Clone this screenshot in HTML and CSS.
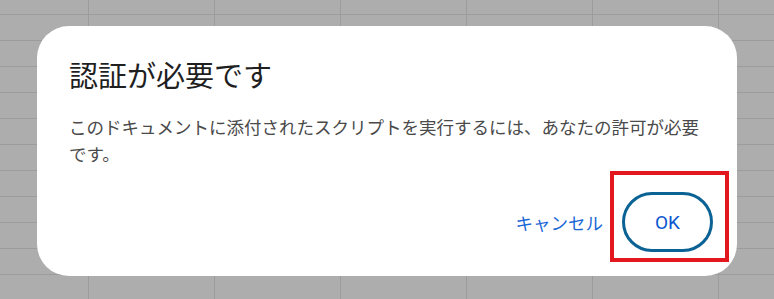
FILE: index.html
```html
<!DOCTYPE html>
<html lang="ja">
<head>
    <meta charset="UTF-8">
    <meta name="viewport" content="width=device-width, initial-scale=1.0">
    <title>認証が必要です</title>
    <link rel="stylesheet" href="styles.css">
</head>
<body>
    <!-- Sheet grid behind the dialog -->
    <div class="sheet-backdrop">
        <div class="auth-dialog" role="dialog" aria-labelledby="auth-title">
            <h2 id="auth-title" class="auth-title">認証が必要です</h2>
            <p class="auth-text">このドキュメントに添付されたスクリプトを実行するには、あなたの許可が必要です。</p>
            <div class="auth-actions">
                <button type="button" class="btn-text">キャンセル</button>
                <button type="button" class="btn-ok">OK</button>
            </div>
        </div>
    </div>

    <!-- Annotation box around the OK button -->
    <div class="highlight-box"></div>
</body>
</html>
```

FILE: styles.css
```css
/* Page and sheet grid */
body {
    margin: 0;
    position: relative;
    font-family: "Noto Sans CJK JP", "Noto Sans", sans-serif;
}

.sheet-backdrop {
    width: 774px;
    height: 299px;
    box-sizing: border-box;
    padding: 26px 0 0 37px;
    background-color: #adadad;
    background-image:
        linear-gradient(#9c9c9c 1px, transparent 1px),
        linear-gradient(90deg, #9c9c9c 1px, transparent 1px);
    background-size: 126px 26px;
    background-position: 88px 14px;
}

/* Dialog */
.auth-dialog {
    width: 700px;
    height: 250px;
    box-sizing: border-box;
    padding: 30px 32px 24px;
    background: #ffffff;
    border-radius: 32px;
    display: flex;
    flex-direction: column;
}

.auth-title {
    margin: 0;
    font-size: 29px;
    line-height: 36px;
    font-weight: 400;
    color: #1f1f1f;
}

.auth-text {
    margin: 21px 0 0;
    font-size: 17.5px;
    line-height: 27px;
    color: #4a4a4a;
}

.auth-actions {
    margin: auto -8px 0 0;
    display: flex;
    justify-content: flex-end;
    align-items: center;
    gap: 9px;
}

.btn-text {
    background: none;
    border: none;
    padding: 0 10px;
    height: 40px;
    font-family: "Noto Sans CJK JP", sans-serif;
    font-size: 17.5px;
    color: #1a68d6;
    cursor: pointer;
}

.btn-ok {
    width: 91px;
    height: 60px;
    box-sizing: border-box;
    background: #ffffff;
    border: 3px solid #0b6294;
    border-radius: 30px;
    font-family: Roboto, "Noto Sans", sans-serif;
    font-size: 19px;
    font-weight: 400;
    color: #0b57d0;
    cursor: pointer;
}

/* Red annotation rectangle */
.highlight-box {
    position: absolute;
    top: 171px;
    left: 610px;
    width: 119px;
    height: 91px;
    box-sizing: border-box;
    border: 4px solid #e3171e;
}
```
